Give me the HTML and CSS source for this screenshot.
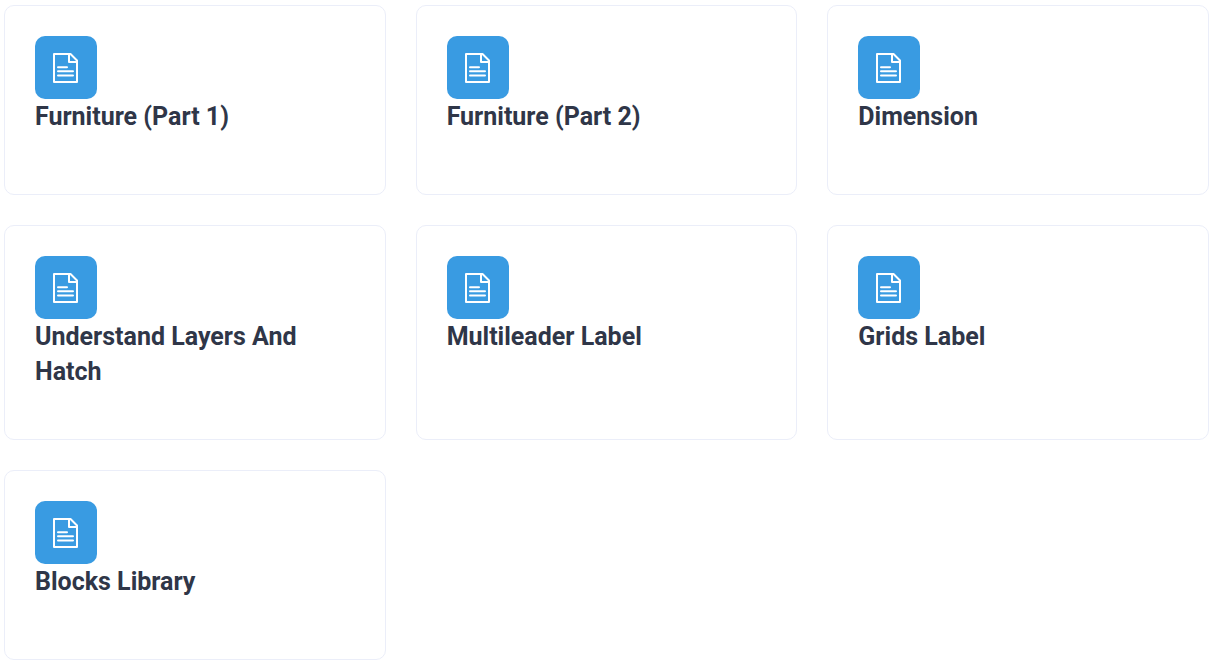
FILE: index.html
```html
<!DOCTYPE html>
<html lang="en">
<head>
<meta charset="utf-8">
<meta name="viewport" content="width=device-width, initial-scale=1">
<title>Lessons</title>
<link rel="stylesheet" href="styles.css">
</head>
<body>
<svg class="sprite" aria-hidden="true">
  <symbol id="document" viewBox="0 0 26 30">
    <path d="M1 1H17.500L24 7.500V29H1Z"/>
    <path d="M16 1V9H24"/>
    <path d="M5 14.300H14 M5 18.300H20 M5 22.500H20" stroke-linecap="round"/>
  </symbol>
</svg>
<main class="card-grid">
  <article class="card">
    <div class="card-icon"><svg aria-hidden="true"><use href="#document"/></svg></div>
    <h2 class="card-title">Furniture (Part 1)</h2>
  </article>
  <article class="card">
    <div class="card-icon"><svg aria-hidden="true"><use href="#document"/></svg></div>
    <h2 class="card-title">Furniture (Part 2)</h2>
  </article>
  <article class="card">
    <div class="card-icon"><svg aria-hidden="true"><use href="#document"/></svg></div>
    <h2 class="card-title">Dimension</h2>
  </article>
  <article class="card">
    <div class="card-icon"><svg aria-hidden="true"><use href="#document"/></svg></div>
    <h2 class="card-title">Understand Layers And Hatch</h2>
  </article>
  <article class="card">
    <div class="card-icon"><svg aria-hidden="true"><use href="#document"/></svg></div>
    <h2 class="card-title">Multileader Label</h2>
  </article>
  <article class="card">
    <div class="card-icon"><svg aria-hidden="true"><use href="#document"/></svg></div>
    <h2 class="card-title">Grids Label</h2>
  </article>
  <article class="card">
    <div class="card-icon"><svg aria-hidden="true"><use href="#document"/></svg></div>
    <h2 class="card-title">Blocks Library</h2>
  </article>
</main>
</body>
</html>
```

FILE: styles.css
```css
* {
  box-sizing: border-box;
}

body {
  margin: 0;
  background: #fff;
  color: #2f3648;
  font-family: Roboto, "Liberation Sans", sans-serif;
}

.sprite {
  display: none;
}

.card-grid {
  display: grid;
  grid-template-columns: repeat(3, minmax(0, 1fr));
  gap: 30px;
  padding: 5px 4px;
}

.card {
  min-height: 190px;
  padding: 30px;
  border: 1px solid #ebeef9;
  border-radius: 10px;
}

.card-icon {
  display: flex;
  align-items: center;
  justify-content: center;
  width: 62px;
  height: 63px;
  border-radius: 10px;
  background: #399be2;
}

.card-icon svg {
  width: 26px;
  height: 30px;
  fill: none;
  stroke: #fff;
  stroke-width: 2px;
  stroke-linejoin: round;
}

.card-title {
  margin: 0 0 20px;
  font-size: 25px;
  font-weight: 700;
  line-height: 35px;
}

@media (max-width: 800px) {
  .card-grid {
    grid-template-columns: repeat(2, minmax(0, 1fr));
  }
}

@media (max-width: 520px) {
  .card-grid {
    grid-template-columns: 1fr;
  }
}
```
